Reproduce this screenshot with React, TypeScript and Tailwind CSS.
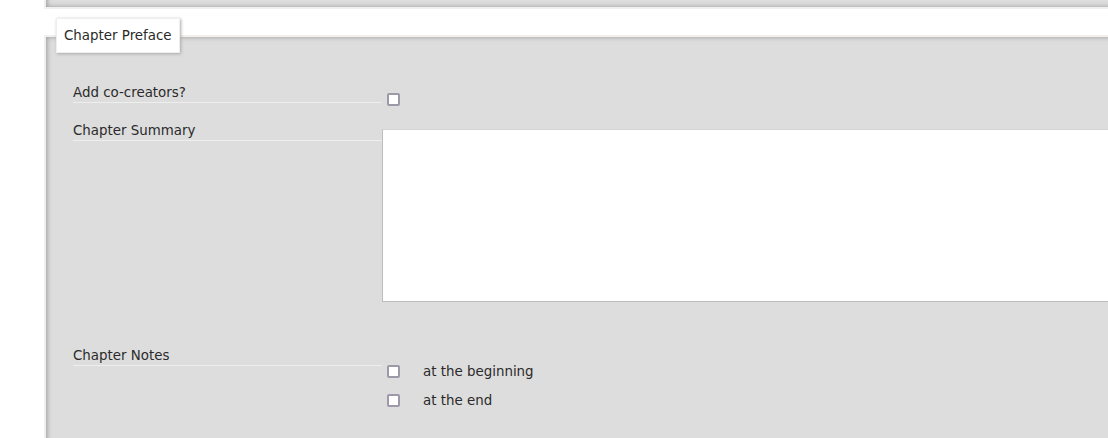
import React from 'react';

const FONT = { fontFamily: '"DejaVu Sans", Verdana, sans-serif' };

function Box() {
  return (
    <span className="block h-[13px] w-[13px] shrink-0 rounded-[2px] border-2 border-[#9e99a8] bg-white" />
  );
}

function Term({ children }: { children: React.ReactNode }) {
  return (
    <div className="w-[309px] shrink-0 border-b border-[#eeeeee] pb-[2px] text-[13.4px] leading-[15px] text-[#2a2a2a]">
      {children}
    </div>
  );
}

export default function App() {
  return (
    <div className="h-[438px] w-[1108px] overflow-hidden bg-white" style={FONT}>
      {/* tail of the previous fieldset */}
      <div className="ml-[44px] mt-[-20px] h-[29px] w-[1156px] border-2 border-[#f3efec] bg-[#dddddd] shadow-[inset_1px_0_5px_#999]" />

      <fieldset className="ml-[44px] mt-[9px] h-[460px] w-[1156px] border-2 border-[#f3efec] bg-[#dddddd] pl-[10px] shadow-[inset_1px_0_5px_#999]">
        <legend className="border border-[#eeeeee] bg-white px-[7px] py-[7px] text-[13.4px] leading-[19px] text-[#2a2a2a] shadow-[1px_1px_3px_#aaa]">
          Chapter Preface
        </legend>

        <div className="pl-[17px]">
          {/* co-creators */}
          <div className="mt-[32px] flex items-start">
            <Term>Add co-creators?</Term>
            <div className="ml-[5px] mt-[8px]">
              <Box />
            </div>
          </div>

          {/* summary */}
          <div className="mt-[17px] flex items-start">
            <Term>Chapter Summary</Term>
            <textarea
              className="mt-[6px] h-[173px] w-[800px] resize-none border border-[#bdbdbd] border-t-[#d4d4d4] bg-white"
              aria-label="Chapter Summary"
            />
          </div>

          {/* notes */}
          <div className="mt-[46px] flex items-start">
            <Term>Chapter Notes</Term>
            <div className="ml-[5px] mt-[17px] flex flex-col gap-[16px] text-[13.4px] leading-[13px] text-[#2a2a2a]">
              <div className="flex items-center gap-[23px]">
                <Box />
                <span>at the beginning</span>
              </div>
              <div className="flex items-center gap-[23px]">
                <Box />
                <span>at the end</span>
              </div>
            </div>
          </div>
        </div>
      </fieldset>
    </div>
  );
}
